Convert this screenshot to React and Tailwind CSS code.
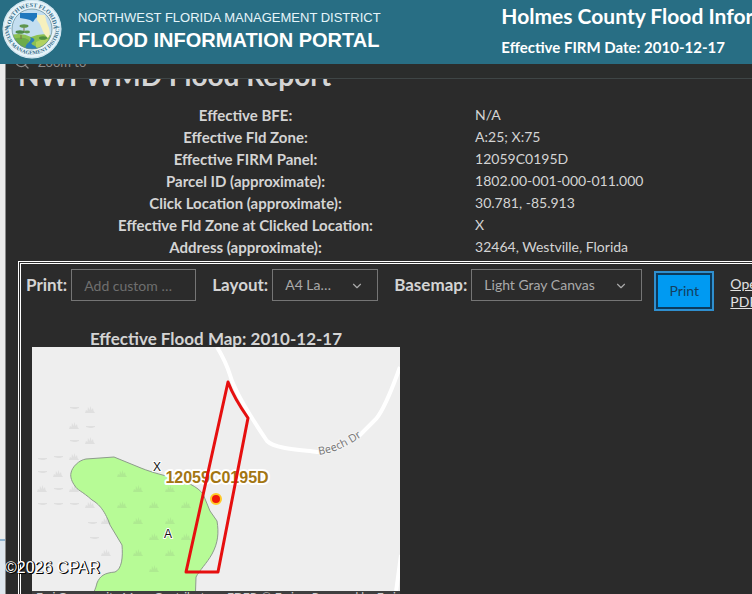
import { ChevronDown, Search } from "lucide-react";

const reportRows = [
  { label: "Effective BFE:", value: "N/A" },
  { label: "Effective Fld Zone:", value: "A:25; X:75" },
  { label: "Effective FIRM Panel:", value: "12059C0195D" },
  { label: "Parcel ID (approximate):", value: "1802.00-001-000-011.000" },
  { label: "Click Location (approximate):", value: "30.781, -85.913" },
  { label: "Effective Fld Zone at Clicked Location:", value: "X" },
  { label: "Address (approximate):", value: "32464, Westville, Florida" },
];

// marsh symbols on the basemap, [x, y] inside the map
const tufts = [
  [58, 63], [42, 79], [58, 94], [42, 110], [26, 127], [10, 142], [42, 142],
  [58, 158], [74, 206], [90, 127], [106, 142], [122, 158], [106, 174],
  [90, 158], [138, 142], [138, 174], [122, 190], [106, 206], [138, 206], [122, 222],
  [74, 174], [154, 190], [154, 158],
];
const dashes = [
  [42, 60], [58, 79], [42, 93], [26, 109], [10, 111], [10, 124], [26, 141],
  [10, 156], [42, 156], [26, 156], [60, 175], [62, 190],
];

function DistrictLogo() {
  return (
    <svg viewBox="0 0 60 60" className="h-[60px] w-[60px] shrink-0" role="img" aria-label="District seal">
      <defs>
        <path id="seal-top" d="M 9.5 36 A 21.5 21.5 0 1 1 50.5 36" />
        <path id="seal-bottom" d="M 3.4 22 A 27.3 27.3 0 1 0 56.6 22" />
        <clipPath id="seal-clip">
          <circle cx="30" cy="30" r="20" />
        </clipPath>
      </defs>
      <circle cx="30" cy="29" r="29.5" fill="#e6f3f9" />
      <circle cx="30" cy="29" r="28.7" fill="none" stroke="#b5d5e6" strokeWidth="0.6" />
      <g transform="translate(0 -1)">
        <g clipPath="url(#seal-clip)">
          <rect x="9" y="9" width="42" height="42" fill="#c3def0" />
          <path d="M9 36 Q20 33 29 38 Q40 33 51 37 V51 H9Z" fill="#8cc152" />
          <path d="M9 41 Q20 36 27 41 L25 51 H9Z" fill="#6cab4a" />
          <path d="M34 43 Q42 38 51 41 V51 H34Z" fill="#b1d25e" />
          <path d="M28 38 Q35 40 31 43 Q27 45 33 47 L37 51 H23 Q23 46 27 43 Q30 40 28 38Z" fill="#2c80b8" />
          <path d="M18 14 H35 V18 L33 20 L31 23 L28 21 L24 20 L18 19Z" fill="#1f78bd" />
          <path d="M35 16 H43 Q44 23 47 29 Q49 36 46 39 Q42 36 40 30 Q38 24 35 21Z" fill="#f6f0bd" />
          <path d="M22 27 V34 M19 36 V40" stroke="#806d44" strokeWidth="1" />
          <ellipse cx="22" cy="27" rx="4.5" ry="1.8" fill="#60964e" />
          <ellipse cx="18" cy="33" rx="4.5" ry="1.8" fill="#4e8b48" />
          <ellipse cx="25" cy="33" rx="3" ry="1.4" fill="#5f9a4c" />
          <ellipse cx="41" cy="39" rx="4" ry="1.8" fill="#4f8f42" />
        </g>
        <circle cx="30" cy="30" r="20" fill="none" stroke="#5e8794" strokeWidth="0.7" />
        <g fill="#376f8b" fontFamily="Liberation Serif, serif" fontWeight="700">
          <text textAnchor="middle" fontSize="6">
            <textPath href="#seal-top" startOffset="50%">NORTHWEST FLORIDA</textPath>
          </text>
          <text textAnchor="middle" fontSize="5.4">
            <textPath href="#seal-bottom" startOffset="50%">WATER MANAGEMENT DISTRICT</textPath>
          </text>
        </g>
      </g>
    </svg>
  );
}

function Header() {
  return (
    <header className="relative z-10 flex h-16 bg-[#286e84] text-white">
      <div className="flex w-2/3 shrink-0 gap-4 pl-0.5">
        <DistrictLogo />
        <div className="whitespace-nowrap pt-2 font-['Liberation_Sans',sans-serif]">
          <p className="text-[13px] leading-5 text-[#e6f5fa]">NORTHWEST FLORIDA MANAGEMENT DISTRICT</p>
          <p className="text-xl leading-6 font-bold">FLOOD INFORMATION PORTAL</p>
        </div>
      </div>
      <div className="whitespace-nowrap font-bold">
        <h1 className="text-[21px] leading-8">Holmes County Flood Information</h1>
        <p className="text-[15px] leading-[30px]">Effective FIRM Date: 2010-12-17</p>
      </div>
    </header>
  );
}

function ReportTable() {
  return (
    <table className="w-full table-fixed">
      <tbody>
        {reportRows.map((row) => (
          <tr key={row.label} className="leading-[22px]">
            <th scope="row" className="w-[62%] p-0 text-center text-[15px] font-bold">
              {row.label}
            </th>
            <td className="p-0 pl-0.5 text-sm leading-[22px] whitespace-nowrap">{row.value}</td>
          </tr>
        ))}
      </tbody>
    </table>
  );
}

function SelectField({ id, label, option, className }) {
  return (
    <div className="flex shrink-0 items-center gap-1">
      <label htmlFor={id} className="text-[17px] font-bold">
        {label}
      </label>
      <div className={`relative ${className}`}>
        <select
          id={id}
          className="h-8 w-full appearance-none border border-[#757575] bg-transparent px-3 text-sm text-[#a9a9a9]"
        >
          <option>{option}</option>
        </select>
        <ChevronDown className="pointer-events-none absolute top-2.5 right-3.5 h-3.5 w-3.5 text-[#a9a9a9]" />
      </div>
    </div>
  );
}

function PrintBar() {
  return (
    <form className="flex items-start gap-4 pt-[5px] pl-[5px]" onSubmit={(e) => e.preventDefault()}>
      <div className="flex shrink-0 items-center gap-1">
        <label htmlFor="print-title" className="text-[17px] font-bold">
          Print:
        </label>
        <input
          id="print-title"
          type="text"
          placeholder="Add custom …"
          className="h-8 w-[125px] border border-[#757575] bg-transparent px-3 text-sm placeholder:text-[#6f6f6f]"
        />
      </div>
      <SelectField id="layout" label="Layout:" option="A4 La…" className="w-[106px]" />
      <SelectField id="basemap" label="Basemap:" option="Light Gray Canvas" className="w-[171px]" />
      <button
        type="submit"
        className="-ml-1 mt-0.5 h-10 w-[60px] shrink-0 border-2 border-[#2f8fcf] bg-[#009af2] text-sm text-[#14405f] shadow-[inset_0_0_0_2px_#0b3a5c]"
      >
        Print
      </button>
      <a href="#pdf" className="mt-1.5 w-10 shrink-0 text-sm leading-[18px] text-[#e2e2e2] underline">
        Open PDF
      </a>
    </form>
  );
}

function FloodMap() {
  return (
    <figure className="ml-[11px] w-[368px]">
      <figcaption className="text-center text-[17px] leading-[17px] font-bold">
        Effective Flood Map: 2010-12-17
      </figcaption>
      <div className="relative">
        <svg viewBox="0 0 368 260" className="block w-full bg-[#eeeeee]" role="img" aria-label="Flood map">
          <defs>
            <path id="beech-dr" d="M287 108 Q308 105 332 88" />
          </defs>
          <path
            d="M39 126 C40 120 47 113 54 112 L82 110 L104 119 C118 125 127 127 138 130 C154 134 166 140 171 147 L178 164 L185 174 C187 186 186 196 180 207 C175 216 167 224 164 230 L163 260 H54 C61 248 64 241 65 236 C68 229 72 226 83 225 C90 222 91 210 90 198 L78 178 C72 161 65 156 60 153 C50 144 45 143 43 139 C40 135 38 130 39 126Z"
            fill="#b7fb96"
            stroke="#8d9c8b"
            strokeWidth="1"
          />
          <g fill="#777777" fillOpacity="0.12">
            {tufts.map(([x, y]) => (
              <path
                key={`${x}-${y}`}
                transform={`translate(${x - 5} ${y - 5})`}
                d="M0 8 L1 5 L2.5 6 L3 2 L4.5 5 L5.5 1 L6.5 5 L8 3 L8.5 6 L10 8Z"
              />
            ))}
            {dashes.map(([x, y]) => (
              <path key={`${x}-${y}`} transform={`translate(${x - 4} ${y})`} d="M0 0 H9 V1 L6 2 H4 L0 1Z" />
            ))}
          </g>
          <g fill="none" stroke="#ffffff" strokeWidth="4">
            <path d="M185 0 C191 10 195 18 198 28 C203 45 216 66 235 94 C243 102 270 103 285 105 H288" />
            <path d="M325 91 L344 72 C354 60 362 36 368 20" />
            <path d="M369 208 L362 260" />
          </g>
          <text
            fontFamily="Noto Sans, sans-serif"
            fontSize="11"
            fill="#7b7b7b"
            stroke="#f5f5f5"
            strokeWidth="2"
            paintOrder="stroke"
          >
            <textPath href="#beech-dr">Beech Dr</textPath>
          </text>
          <g
            fontFamily="Liberation Sans, sans-serif"
            textAnchor="middle"
            stroke="#ffffff"
            strokeLinejoin="round"
            paintOrder="stroke"
          >
            <text x="125" y="124" fontSize="12" fill="#111111" strokeWidth="2">
              X
            </text>
            <text x="136" y="191" fontSize="12" fill="#111111" strokeWidth="2">
              A
            </text>
            <text x="185" y="136" fontSize="16" fontWeight="700" fill="#a37613" strokeWidth="4">
              12059C0195D
            </text>
          </g>
          <path
            d="M196 35 Q202 51 216 71 L186 225 H154 Z"
            fill="none"
            stroke="#e60f0f"
            strokeWidth="3"
            strokeLinejoin="round"
          />
          <circle cx="184" cy="152" r="5" fill="#f01808" stroke="#ffc928" strokeWidth="2" />
        </svg>
        <div className="absolute inset-x-0 bottom-0 flex h-4 items-start justify-between overflow-hidden bg-[#3f3f3f] px-1 text-xs leading-3 whitespace-nowrap text-[#cfcfcf]">
          <span>Esri Community Maps Contributors, FDEP, © Esri</span>
          <span>Powered by Esri</span>
        </div>
      </div>
    </figure>
  );
}

function App() {
  return (
    <div className="relative flex h-screen flex-col overflow-hidden bg-[#2b2b2b] font-['Lato','Open_Sans',sans-serif] text-[#d4d4d4]">
      <Header />
      <div className="flex min-h-0 flex-1">
        <div className="flex w-1.5 shrink-0 flex-col border-r border-[#8a8a8a] bg-[#ebebeb]">
          <div className="h-[477px] border-b-2 border-[#8fb3cf]" />
          <div className="flex-1 bg-[#dfe7ee]" />
        </div>
        <main className="min-w-0 flex-1">
          <div className="h-[15px] overflow-hidden border-b border-[#3f4646] bg-[#2b2d2c]">
            <button type="button" className="-mt-3 flex items-center gap-2 pl-2 text-[13px] leading-5 text-[#8c8c8c]">
              <Search className="h-4 w-4" />
              Zoom to
            </button>
          </div>
          <div className="overflow-hidden pl-3">
            <h2 className="-mt-[22px] text-[28px] leading-9 font-bold whitespace-nowrap">NWFWMD Flood Report</h2>
            <div className="pt-[11px] pb-[3px]">
              <ReportTable />
            </div>
            <section className="-mr-6 border-[3px] border-double border-white pb-4">
              <PrintBar />
              <div className="pt-[19px]">
                <FloodMap />
              </div>
            </section>
          </div>
        </main>
      </div>
      <p className="absolute bottom-4 left-[5px] font-['Liberation_Sans',sans-serif] text-base leading-5 text-white [text-shadow:1px_1px_0_#000,1px_0_0_#000]">
        ©2026 CPAR
      </p>
    </div>
  );
}

export default App;
